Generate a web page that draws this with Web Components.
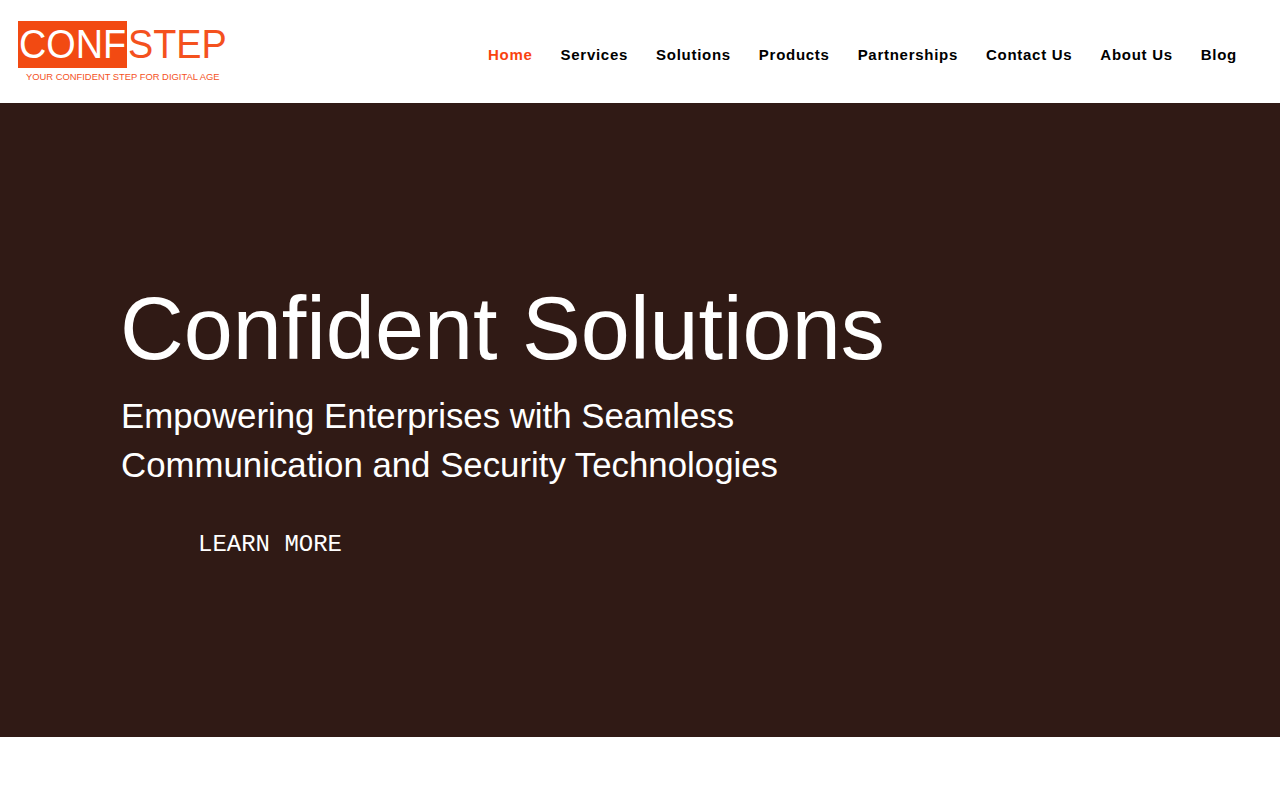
<!DOCTYPE html>
<html lang="en">
<head>
<meta charset="utf-8">
<title>Confstep</title>
<style>
  html, body { margin: 0; padding: 0; background: #fff; font-family: "Liberation Sans", Arial, sans-serif; }
  body { height: 800px; overflow: hidden; }
</style>
</head>
<body>
<site-header>
  <conf-logo slot="logo"></conf-logo>
  <nav-link active>Home</nav-link>
  <nav-link>Services</nav-link>
  <nav-link>Solutions</nav-link>
  <nav-link>Products</nav-link>
  <nav-link>Partnerships</nav-link>
  <nav-link>Contact Us</nav-link>
  <nav-link>About Us</nav-link>
  <nav-link>Blog</nav-link>
</site-header>
<hero-banner>
  <span slot="title">Confident Solutions</span>
  <span slot="lead">Empowering Enterprises with Seamless<br>Communication and Security Technologies</span>
  <span slot="action">LEARN MORE</span>
</hero-banner>
<script>
class SiteHeader extends HTMLElement {
  connectedCallback() {
    this.attachShadow({ mode: 'open' });
    this.shadowRoot.innerHTML = `
      <style>
        :host { display: flex; height: 103px; background: #fff; align-items: flex-start; justify-content: space-between; box-sizing: border-box; padding: 21px 43px 0 18px; }
        nav { display: flex; gap: 28px; padding-top: 24px; }
      </style>
      <slot name="logo"></slot>
      <nav><slot></slot></nav>
    `;
  }
}
customElements.define('site-header', SiteHeader);

class ConfLogo extends HTMLElement {
  connectedCallback() {
    this.attachShadow({ mode: 'open' });
    this.shadowRoot.innerHTML = `
      <style>
        :host { display: block; width: 208px; font-family: "Liberation Sans", Arial, sans-serif; color: #f4511e; }
        .mark { display: flex; height: 47px; font-size: 40px; line-height: 46px; }
        .conf { flex: none; background: #f24a12; color: #fff; width: 109px; box-sizing: border-box; padding-left: 1px; }
        .step { flex: none; padding-left: 1px; }
        .mark b { display: inline-block; font-weight: 400; transform-origin: left center; }
        .conf b { transform: scaleX(.945); }
        .step b { transform: scaleX(.945); }
        .tag { font-size: 9.4px; line-height: 10px; margin: 4px 0 0 8px; white-space: nowrap; }
      </style>
      <div class="mark"><span class="conf"><b>CONF</b></span><span class="step"><b>STEP</b></span></div>
      <div class="tag">YOUR CONFIDENT STEP FOR DIGITAL AGE</div>
    `;
  }
}
customElements.define('conf-logo', ConfLogo);

class NavLink extends HTMLElement {
  connectedCallback() {
    this.attachShadow({ mode: 'open' });
    this.shadowRoot.innerHTML = `
      <style>
        :host { display: block; font-family: "Liberation Sans", Arial, sans-serif; font-size: 15px; font-weight: 700; line-height: 20px; letter-spacing: 0.72px; color: #000; white-space: nowrap; }
        :host([active]) { color: #f9430f; }
      </style>
      <slot></slot>
    `;
  }
}
customElements.define('nav-link', NavLink);

class HeroBanner extends HTMLElement {
  connectedCallback() {
    this.attachShadow({ mode: 'open' });
    this.shadowRoot.innerHTML = `
      <style>
        :host { display: block; height: 634px; background: #301a15; color: #fff; box-sizing: border-box; padding: 176px 0 0 121px; font-family: "Liberation Sans", Arial, sans-serif; }
        .title { font-size: 88.2px; line-height: 100px; font-weight: 400; margin: 0 0 0 -1px; }
        .lead { font-size: 34.8px; line-height: 49px; margin: 12px 0 0; }
        .action { font-family: "Liberation Mono", "Courier New", monospace; font-size: 24px; line-height: 30px; margin: 41px 0 0 77px; }
      </style>
      <h1 class="title"><slot name="title"></slot></h1>
      <p class="lead"><slot name="lead"></slot></p>
      <div class="action"><slot name="action"></slot></div>
    `;
  }
}
customElements.define('hero-banner', HeroBanner);
</script>
</body>
</html>
